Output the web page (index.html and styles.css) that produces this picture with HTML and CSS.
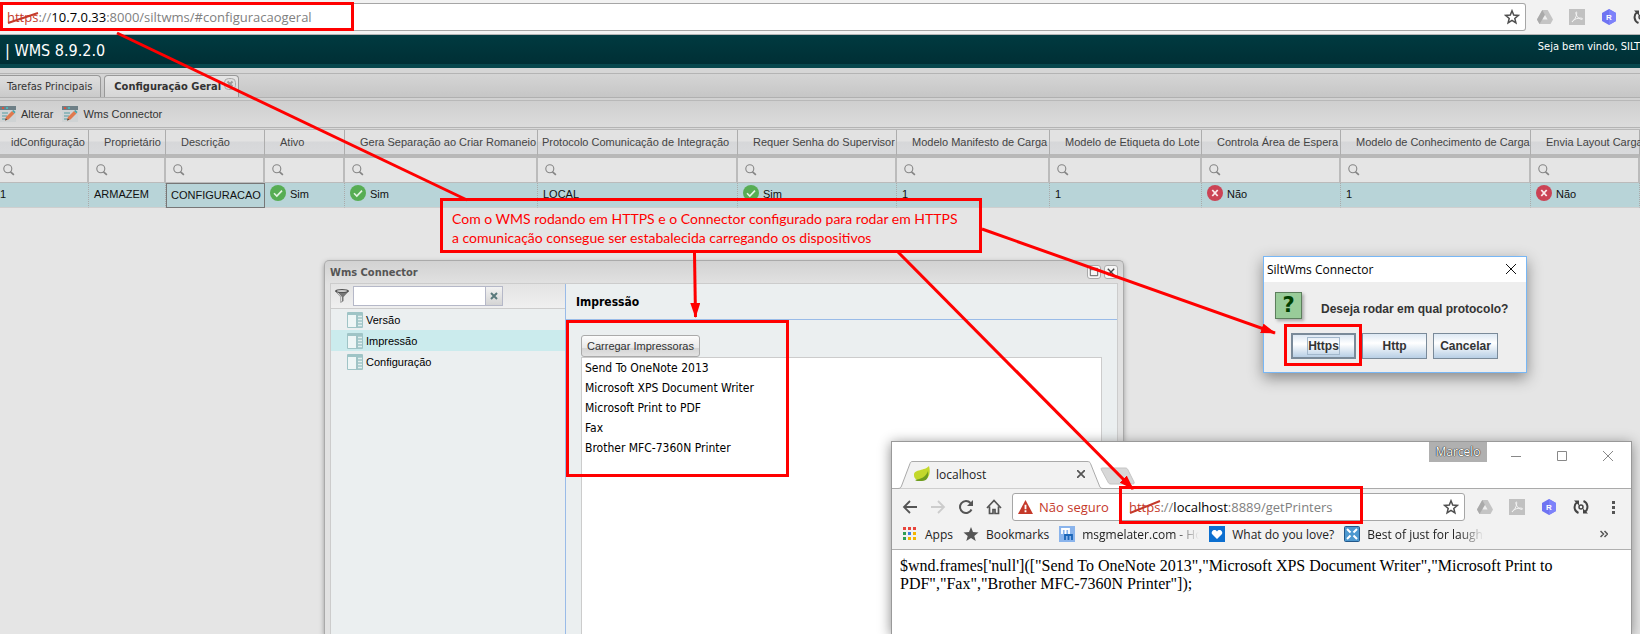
FILE: index.html
```
<!DOCTYPE html>
<html lang="pt-BR">
  <head>
    <meta charset="UTF-8">
    <meta name="viewport" content="width=device-width, initial-scale=1.0">
    <title>WMS 8.9.2.0</title>
    <link rel="stylesheet" href="styles.css">
  </head>
  <body>
    <!--shared icons-->
    <svg class="defs" aria-hidden="true">
      <symbol id="star" viewBox="0 0 16 16"><path d="M8 1.8l1.7 4.3 4.6.3-3.5 3 1.1 4.5L8 11.4l-3.9 2.5 1.1-4.5-3.5-3 4.6-.3z" fill="none" stroke="#4f4f4f" stroke-width="1.5"/></symbol>
      <symbol id="drive" viewBox="0 0 16 16"><path d="M5.300 1h5.400L16 10.500 13.500 15h-11L0 10.500z" fill="#c4c4c4"/><path d="M5.300 1L0 10.500 2.500 15 8 6z" fill="#aaa"/><path d="M8 6l2.600 4.500H5.400z" fill="#eee"/></symbol>
      <symbol id="pdf" viewBox="0 0 16 16"><path d="M0 0h16v16H0z" fill="#c1c1c1"/><path d="M3 13c2-1 5-6 4.700-9.500C7.500 2 6.400 3 7 5c.8 3 3.500 5.500 6 5.300 1.500-.3 0-1.600-3-1.200C7 9.500 3.500 11 3 13z" fill="none" stroke="#f4f4f4"/></symbol>
      <symbol id="hexa" viewBox="0 0 16 16"><path d="M8 0l7 4v8l-7 4-7-4V4z" fill="#6f74f2"/><path d="M8 0l7 4v8l-7 4z" fill="#7d82fa"/><text x="8" y="11" text-anchor="middle" class="hexa-letter">R</text></symbol>
      <symbol id="sync" viewBox="0 0 16 16"><path d="M5.500 14A6.300 6.300 0 0 1 4 3.200M10.500 2A6.300 6.300 0 0 1 12 12.800" fill="none" stroke="#444" stroke-width="2"/><path d="M1 1.500h5v5zM15 14.500h-5v-5z" fill="#444"/><circle cx="8" cy="8" r="2" fill="none" stroke="#444" stroke-width="1.500"/></symbol>
      <symbol id="edit" viewBox="0 0 16 16"><path d="M0 0h16v4H0z" fill="#6e7f86"/><path d="M2 1h2v2H2z" fill="#d8533e"/><path d="M6 1h2v2H6z" fill="#4bb3b8"/><path d="M0 4h16v12H0z" fill="#cfd3d4"/><path d="M2 7h6M2 10h5M2 13h3" stroke="#7fb0b3" stroke-width="1.500"/><path d="M5 14.500l1-3.500 6-6 2.500 2.500-6 6z" fill="#e07a4e"/><path d="M12 5l1.500-1 2 2-1 1.500z" fill="#45a3aa"/><path d="M5 14.500l.7-2.300 1.600 1.600z" fill="#444"/></symbol>
      <symbol id="lens" viewBox="0 0 12 12"><circle cx="4.800" cy="4.800" r="4" fill="none" stroke="#858585" stroke-width="1.100"/><path d="M7.500 7.800l3.400 3" stroke="#858585" stroke-width="1.700"/></symbol>
      <symbol id="yes" viewBox="0 0 16 16"><circle cx="8" cy="8" r="8" fill="#57ad54"/><path d="M4 8.300l2.800 2.800L12 5.600" fill="none" stroke="#e4f3e4" stroke-width="1.600"/></symbol>
      <symbol id="no" viewBox="0 0 16 16"><circle cx="8" cy="8" r="8" fill="#cb4355"/><path d="M5.300 5l5.400 6M10.700 5l-5.400 6" stroke="#fbe9ec" stroke-width="1.800"/></symbol>
      <symbol id="form" viewBox="0 0 16 16"><path d="M1 0h14a1 1 0 0 1 1 1v14a1 1 0 0 1-1 1H1a1 1 0 0 1-1-1V1a1 1 0 0 1 1-1z" fill="#9fc4c6"/><path d="M1 3h8v12H1z" fill="#eef6f6"/><path d="M11 4.500h4M11 7.500h4M11 10.500h4M11 13.500h4" stroke="#e1efef" stroke-width="1.500"/></symbol>
    </svg>

    <div class="desktop">
      <div class="topbar">
        <div class="address" role="textbox" aria-label="Endereço"><span class="scheme">https</span><span>://</span><b>10.7.0.33</b><span>:8000/siltwms/#configuracaogeral</span><svg class="icon push"><use href="#star"/></svg></div>
        <div class="extensions">
          <svg class="icon"><use href="#drive"/></svg>
          <svg class="icon"><use href="#pdf"/></svg>
          <svg class="icon"><use href="#hexa"/></svg>
          <svg class="icon"><use href="#sync"/></svg>
        </div>
      </div>

      <div class="header">
        <h1>| WMS 8.9.2.0</h1>
        <span class="welcome">Seja bem vindo, SILT</span>
      </div>

      <div class="tabs">
        <button class="tab">Tarefas Principais</button>
        <button class="tab active">Configuração Geral<svg class="tab-close" viewBox="0 0 12 12"><rect x=".5" y=".5" width="11" height="11" rx="4" fill="#ddd" stroke="#aaa"/><path d="M3.500 3.500l5 5M8.500 3.500l-5 5" stroke="#999" stroke-width="2"/></svg></button>
      </div>

      <div class="toolbar">
        <button><svg class="icon"><use href="#edit"/></svg>Alterar</button>
        <button><svg class="icon"><use href="#edit"/></svg>Wms Connector</button>
      </div>

      <table class="grid">
        <colgroup>
          <col class="c1"><col class="c2"><col class="c3"><col class="c4"><col class="c5"><col class="c6">
          <col class="c7"><col class="c8"><col class="c9"><col class="c10"><col class="c11"><col>
        </colgroup>
        <thead>
          <tr>
            <th class="tight">idConfiguração</th>
            <th>Proprietário</th>
            <th>Descrição</th>
            <th>Ativo</th>
            <th>Gera Separação ao Criar Romaneio</th>
            <th class="flush">Protocolo Comunicação de Integração</th>
            <th>Requer Senha do Supervisor</th>
            <th>Modelo Manifesto de Carga</th>
            <th>Modelo de Etiqueta do Lote</th>
            <th>Controla Área de Espera</th>
            <th>Modelo de Conhecimento de Carga</th>
            <th>Envia Layout Carga</th>
          </tr>
          <tr class="filters">
            <td class="first"><label><svg><use href="#lens"/></svg><input aria-label="idConfiguração"></label></td>
            <td><label><svg><use href="#lens"/></svg><input aria-label="Proprietário"></label></td>
            <td><label><svg><use href="#lens"/></svg><input aria-label="Descrição"></label></td>
            <td><label><svg><use href="#lens"/></svg><input aria-label="Ativo"></label></td>
            <td><label><svg><use href="#lens"/></svg><input aria-label="Gera Separação"></label></td>
            <td><label><svg><use href="#lens"/></svg><input aria-label="Protocolo"></label></td>
            <td><label><svg><use href="#lens"/></svg><input aria-label="Requer Senha"></label></td>
            <td><label><svg><use href="#lens"/></svg><input aria-label="Modelo Manifesto"></label></td>
            <td><label><svg><use href="#lens"/></svg><input aria-label="Modelo de Etiqueta"></label></td>
            <td><label><svg><use href="#lens"/></svg><input aria-label="Controla Área"></label></td>
            <td><label><svg><use href="#lens"/></svg><input aria-label="Modelo de Conhecimento"></label></td>
            <td><label><svg><use href="#lens"/></svg><input aria-label="Envia Layout"></label></td>
          </tr>
        </thead>
        <tbody>
          <tr>
            <td class="first">1</td>
            <td>ARMAZEM</td>
            <td class="selected">CONFIGURACAO</td>
            <td><span class="flag"><svg class="icon"><use href="#yes"/></svg>Sim</span></td>
            <td><span class="flag"><svg class="icon"><use href="#yes"/></svg>Sim</span></td>
            <td>LOCAL</td>
            <td><span class="flag"><svg class="icon"><use href="#yes"/></svg>Sim</span></td>
            <td>1</td>
            <td>1</td>
            <td><span class="flag"><svg class="icon"><use href="#no"/></svg>Não</span></td>
            <td>1</td>
            <td><span class="flag"><svg class="icon"><use href="#no"/></svg>Não</span></td>
          </tr>
        </tbody>
      </table>

      <!--Wms Connector window-->
      <div class="connector">
        <div class="connector-title">
          <h2>Wms Connector</h2>
          <button class="tool" aria-label="Maximizar"><svg viewBox="0 0 13 13"><path d="M2.500 2.500h8v8h-8zM2 4h9" fill="none" stroke="#555"/></svg></button>
          <button class="tool" aria-label="Fechar"><svg viewBox="0 0 13 13"><path d="M3 3l7 7M10 3l-7 7" stroke="#444" stroke-width="1.500"/></svg></button>
        </div>
        <div class="connector-body">
          <div class="tree">
            <div class="tree-filter">
              <svg class="funnel" viewBox="0 0 14 14"><path d="M0 2l5.500 6v6l3-2V8L14 2z" fill="#777"/><path d="M2 3l4.500 5v4.500" fill="none" stroke="#ddd"/><ellipse cx="7" cy="2" rx="7" ry="2" fill="#555"/><ellipse cx="7" cy="2" rx="5" ry="1" fill="#ccc"/></svg>
              <input aria-label="Filtro">
              <button aria-label="Limpar"><svg viewBox="0 0 8 8"><path d="M1 1l6 6M7 1L1 7" stroke="#5a7a7c" stroke-width="2"/></svg></button>
            </div>
            <ul>
              <li><a href="#versao"><svg class="icon"><use href="#form"/></svg>Versão</a></li>
              <li class="current"><a href="#impressao"><svg class="icon"><use href="#form"/></svg>Impressão</a></li>
              <li><a href="#configuracao"><svg class="icon"><use href="#form"/></svg>Configuração</a></li>
            </ul>
          </div>
          <div class="detail">
            <h3>Impressão</h3>
            <div class="detail-body">
              <button class="load">Carregar Impressoras</button>
              <ul class="printers">
                <li>Send To OneNote 2013</li>
                <li>Microsoft XPS Document Writer</li>
                <li>Microsoft Print to PDF</li>
                <li>Fax</li>
                <li>Brother MFC-7360N Printer</li>
              </ul>
            </div>
          </div>
        </div>
      </div>

      <!--protocol dialog-->
      <div class="dialog" role="dialog" aria-label="SiltWms Connector">
        <div class="dialog-title">
          <span>SiltWms Connector</span>
          <button aria-label="Fechar"><svg viewBox="0 0 10 10"><path d="M0 0l10 10M10 0L0 10" stroke="#111"/></svg></button>
        </div>
        <div class="question">
          <span class="question-mark">?</span>
          <p>Deseja rodar em qual protocolo?</p>
        </div>
        <div class="choices">
          <button class="default"><span>Https</span></button>
          <button>Http</button>
          <button>Cancelar</button>
        </div>
      </div>

      <!--browser window with the printers response-->
      <div class="browser">
        <div class="strip">
          <svg class="tab-shape" viewBox="0 0 246 28"><path d="M0 27.500h3c2 0 3-1 3.500-2.500l8.500-22.500C15.500 1 16 .5 18 .5h174c2 0 3 .5 3.500 2l9 22.500c.5 1.500 1.500 2.500 3.500 2.500z" fill="#f2f2f2"/><path d="M0 27.500h3c2 0 3-1 3.500-2.500l8.500-22.500C15.500 1 16 .5 18 .5h174c2 0 3 .5 3.500 2l9 22.500c.5 1.500 1.500 2.500 3.500 2.500h38" fill="none" stroke="#aaa"/><path d="M207 7h23c1.500 0 2.500.5 3 2l6 12c.5 1.500 0 2-1.500 2H216c-1.500 0-2.500-.5-3-2l-6.500-12c-.5-1.500-.5-2 .5-2z" fill="#d8d8d8" stroke="#c4c4c4"/></svg>
          <div class="tab-label">
            <svg class="icon" viewBox="0 0 16 16"><path d="M15 0c2 7 0 14-7 14-5 1-8-1-8-5C0 3 11 5 15 0z" fill="#c3d82c"/><path d="M1 14c6-1 11-3 13-9 1 6-1 10-6 10-3 0-5 .5-7-1z" fill="#6f9d1e"/></svg>
            <span>localhost</span>
            <svg class="small" viewBox="0 0 8 8"><path d="M0 0l8 8M8 0L0 8" stroke="#555" stroke-width="1.700"/></svg>
          </div>
          <span class="profile">Marcelo</span>
          <div class="controls">
            <svg viewBox="0 0 10 10"><path d="M0 5.500h10" stroke="#888"/></svg>
            <svg viewBox="0 0 10 10"><path d="M.5.5h9v9h-9z" fill="none" stroke="#888"/></svg>
            <svg viewBox="0 0 10 10"><path d="M0 0l10 10M10 0L0 10" stroke="#888"/></svg>
          </div>
        </div>
        <div class="nav">
          <svg class="icon" viewBox="0 0 16 16"><path d="M15 8H2M8 2L2 8l6 6" fill="none" stroke="#555" stroke-width="1.800"/></svg>
          <svg class="icon" viewBox="0 0 16 16"><path d="M1 8h13M8 2l6 6-6 6" fill="none" stroke="#ccc" stroke-width="1.800"/></svg>
          <svg class="icon" viewBox="0 0 16 16"><path d="M13.500 10.500A6 6 0 1 1 12.500 4" fill="none" stroke="#555" stroke-width="2"/><path d="M15 1v6H9z" fill="#555"/></svg>
          <svg class="icon" viewBox="0 0 16 16"><path d="M1 9l7-7.500L15 9M3.500 7.500v7h3.500v-4h2v4h3.500v-7" fill="none" stroke="#555" stroke-width="1.700"/></svg>
          <div class="address small-address" role="textbox" aria-label="Endereço localhost">
            <svg class="warn" viewBox="0 0 14 13"><path d="M7 0l7 13H0z" fill="#c5392a"/><path d="M7 4.500v4M7 9.500v2" stroke="#fff" stroke-width="1.700"/></svg>
            <span class="insecure">Não seguro</span><span class="scheme">https</span><span>://</span><b>localhost</b><span>:8889/getPrinters</span><svg class="icon push"><use href="#star"/></svg>
          </div>
          <div class="extensions">
            <svg class="icon"><use href="#drive"/></svg>
            <svg class="icon"><use href="#pdf"/></svg>
            <svg class="icon"><use href="#hexa"/></svg>
            <svg class="icon"><use href="#sync"/></svg>
            <svg class="icon" viewBox="0 0 16 16"><path d="M7 2h3v3H7zM7 7h3v3H7zM7 12h3v3H7z" fill="#555"/></svg>
          </div>
        </div>
        <div class="bookmarks">
          <a href="#apps"><svg class="icon" viewBox="0 0 16 16"><path d="M1 1h3v3H1zM6 1h3v3H6zM11 1h3v3h-3z" fill="#e8453c"/><path d="M1 6h3v3H1zM1 11h3v3H1z" fill="#2f9e55"/><path d="M6 6h3v3H6z" fill="#3f7de0"/><path d="M11 6h3v3h-3zM6 11h3v3H6zM11 11h3v3h-3z" fill="#f4b400"/></svg>Apps</a>
          <a href="#bookmarks"><svg class="icon" viewBox="0 0 16 16"><path d="M8 1l2 5 5.500.4-4.200 3.500 1.400 5.100L8 12l-4.700 3 1.400-5.100L.5 6.400 6 6z" fill="#555"/></svg>Bookmarks</a>
          <a href="#msgmelater" class="cut"><svg class="icon" viewBox="0 0 16 16"><path d="M0 0h16v16H0z" fill="#8ab4ec"/><path d="M3 8V3h7v5M6.500 3v5" fill="none" stroke="#fff" stroke-width="1.800"/><path d="M6 14V9h7v5M9.500 9v5" fill="none" stroke="#1c66b8" stroke-width="1.800"/></svg>msgmelater.com - Ho</a>
          <a href="#love"><svg class="icon" viewBox="0 0 16 16"><path d="M0 0h16v16H0z" fill="#0c6fd0"/><path d="M8 13L3 8c-1.500-3 3-6 5-2.500C10 2 14.500 5 13 8z" fill="#fff"/></svg>What do you love?</a>
          <a href="#laughs" class="cut"><svg class="icon" viewBox="0 0 16 16"><rect x=".5" y=".5" width="15" height="15" rx="1" fill="#4d98cf" stroke="#23588a"/><path d="M3 3l3.500 3.500M13 3L9.500 6.500M3 13l3.500-3.500M13 13L9.500 9.500" stroke="#fff" stroke-width="2"/></svg>Best of just for laughs</a>
          <svg class="more" viewBox="0 0 8 8"><path d="M.5 1l3 3-3 3M4.500 1l3 3-3 3" fill="none" stroke="#555" stroke-width="1.500"/></svg>
        </div>
        <div class="response">$wnd.frames['null'](["Send To OneNote 2013","Microsoft XPS Document Writer","Microsoft Print to PDF","Fax","Brother MFC-7360N Printer"]);</div>
      </div>

      <!--red notes over the windows-->
      <svg class="marks" aria-hidden="true">
        <defs><marker id="tip" markerUnits="userSpaceOnUse" markerWidth="16" markerHeight="10" refX="14" refY="5" orient="auto"><path d="M0 0l15 5-15 5z" fill="red"/></marker></defs>
        <path d="M1.500 3.500h351v26h-351zM567.500 321.500h220v154h-220zM1285.500 325.500h75v39h-75zM1120.500 487.500h241v35h-241z"/>
        <path d="M117 33l350 167"/>
        <path d="M694.500 253l1 64" marker-end="url(#tip)"/>
        <path d="M898 252l235 237" marker-end="url(#tip)"/>
        <path d="M982 229l293 104" marker-end="url(#tip)"/>
        <path class="strike" d="M8 23l30-10M1130 513l30-12"/>
      </svg>
      <div class="note">Com o WMS rodando em HTTPS e o Connector configurado para rodar em HTTPS<br>a comunicação consegue ser estabalecida carregando os dispositivos</div>
    </div>
  </body>
</html>
```
FILE: styles.css
```
*{
  box-sizing: border-box;
  margin: 0;
  padding: 0;
}

body{
  font-family: "Liberation Sans", Arial, sans-serif;
  font-size: 11px;
  color: #333;
}

button, input{
  font: inherit;
  color: inherit;
  background: none;
  border: 0;
}

ul{
  list-style: none;
}

a{
  color: inherit;
  text-decoration: none;
}

.defs{
  position: absolute;
  width: 0;
  height: 0;
}

.desktop{
  position: relative;
  height: 100vh;
  min-height: 480px;
  overflow: hidden;
  background-color: #e5e5e5;
}

.icon{
  width: 16px;
  height: 16px;
  flex: none;
}

.hexa-letter{
  font: bold 8px "Liberation Sans", sans-serif;
  fill: #fff;
}

/*browser bar*/
.topbar{
  display: flex;
  align-items: center;
  height: 35px;
  background-color: #f2f2f2;
  border-bottom: 1px solid #b4b4b4;
}

.address{
  display: flex;
  align-items: center;
  flex: 1;
  height: 28px;
  padding: 0 5px 0 7px;
  background-color: #fff;
  border: 1px solid #a6a6a6;
  border-left: 0;
  border-radius: 0 3px 3px 0;
  font: 13px "Open Sans", "Noto Sans", sans-serif;
  color: #808080;
}

.address b{
  font-weight: normal;
  color: #000;
}

.address .scheme, .insecure{
  color: #c5392a;
}

.push{
  margin-left: auto;
}

.extensions{
  display: flex;
  gap: 16px;
  padding-left: 11px;
}

.topbar .extensions{
  width: 114px;
  overflow: hidden;
}

/*application header*/
.header{
  display: flex;
  justify-content: space-between;
  height: 33px;
  padding-left: 5px;
  background: linear-gradient(#003a40, #002f35);
  border-bottom: 4px solid #07474d;
  color: #fff;
  font-family: "DejaVu Sans Condensed", "Noto Sans", sans-serif;
}

.header h1{
  font-size: 16px;
  font-weight: normal;
  line-height: 32px;
}

.welcome{
  line-height: 24px;
  white-space: nowrap;
}

.tabs{
  display: flex;
  align-items: flex-end;
  gap: 3px;
  height: 30px;
  padding-top: 5px;
  background: linear-gradient(#d6d6d6 5px, #b4b4b4 5px, #b4b4b4 6px, #d5d5d5 6px, #c6c6c6);
  border-bottom: 1px solid #b0b0b0;
}

.tab{
  height: 22px;
  padding: 0 8px 0 7px;
  border: 1px solid #999;
  border-left: 0;
  border-bottom: 0;
  border-radius: 0 4px 0 0;
  background: linear-gradient(#dedede, #cacaca);
  font-family: "DejaVu Sans Condensed", "Noto Sans", sans-serif;
}

.tab.active{
  display: flex;
  align-items: center;
  padding-left: 9px;
  padding-right: 2px;
  border-left: 1px solid #999;
  border-radius: 4px 4px 0 0;
  background: linear-gradient(#e6e6e6, #d6d6d6);
  font-weight: bold;
}

.tab-close{
  width: 12px;
  height: 12px;
  margin-left: 3px;
  margin-bottom: 6px;
}

.toolbar{
  display: flex;
  align-items: center;
  gap: 9px;
  height: 32px;
  background: linear-gradient(#d2d2d2 2px, #b8b8b8 2px, #b8b8b8 3px, #cfcfcf 3px, #dcdcdc 29px, #b4b4b4 29px, #b4b4b4 30px, #d8d8d8 30px);
  border-bottom: 1px solid #b8b8b8;
}

.toolbar button{
  display: flex;
  align-items: center;
  gap: 5px;
}

/*configuration grid*/
.grid{
  width: 100%;
  table-layout: fixed;
  border-collapse: separate;
  border-spacing: 0;
  white-space: nowrap;
}

.c1{ width: 89px; }
.c2{ width: 77px; }
.c3{ width: 99px; }
.c4{ width: 80px; }
.c5{ width: 193px; }
.c6{ width: 200px; }
.c7{ width: 159px; }
.c8{ width: 153px; }
.c9{ width: 152px; }
.c10{ width: 139px; }
.c11{ width: 190px; }

.grid th{
  height: 28px;
  padding-left: 15px;
  border-right: 1px solid #adadad;
  border-bottom: 4px solid #b8b8b8;
  background: linear-gradient(#e2e2e2 11px, #d6d7d9 12px, #d9dadc);
  font-weight: normal;
  text-align: left;
  color: #444;
}

.grid .tight{
  padding-left: 11px;
}

.grid .flush{
  padding-left: 4px;
}

.grid td{
  height: 25px;
  padding: 0 0 2px 5px;
  border-right: 1px dotted #aaa;
  border-bottom: 1px solid #cfcfcf;
  background-color: #b8d4d8;
  color: #111;
}

.grid .first{
  padding-left: 0;
}

.grid .selected{
  border: 1px solid #777;
  padding-left: 4px;
}

.grid .filters td{
  padding-left: 7px;
  padding-bottom: 0;
  border-right: 2px solid #bbb;
  border-bottom: 1px solid #bbb;
  background-color: #e5e5e5;
}

.grid .filters .first{
  padding-left: 3px;
}

.filters label{
  display: flex;
  align-items: center;
  gap: 4px;
}

.filters svg{
  width: 12px;
  height: 12px;
  flex: none;
}

.filters input{
  flex: 1;
  min-width: 0;
}

.flag{
  display: flex;
  align-items: center;
  gap: 4px;
}

.flag .icon{
  margin-bottom: 3px;
}

/*Wms Connector window*/
.connector{
  position: absolute;
  left: 324px;
  top: 260px;
  bottom: 0;
  width: 800px;
  display: flex;
  flex-direction: column;
  padding: 0 5px;
  border: 1px solid #aaa;
  border-bottom: 0;
  border-radius: 5px 5px 0 0;
  background: linear-gradient(#d2d2d2, #e2e2e2 24px);
  box-shadow: 0 2px 5px #999;
}

.connector-title{
  display: flex;
  align-items: center;
  gap: 3px;
  height: 22px;
}

.connector-title h2{
  flex: 1;
  font: bold 11px "DejaVu Sans Condensed", "Noto Sans", sans-serif;
  color: #555;
}

.tool{
  width: 14px;
  height: 14px;
  border: 1px solid #aaa;
  border-radius: 3px;
  background-color: #f6f6f6;
}

.tool svg{
  display: block;
}

.connector-body{
  display: flex;
  flex: 1;
  border: 1px solid #ccc;
  border-bottom: 0;
  background-color: #ebeff0;
  color: #000;
}

.tree{
  width: 234px;
}

.tree-filter{
  display: flex;
  align-items: center;
  height: 25px;
  padding-left: 4px;
  border-bottom: 1px solid #ccc;
  background: linear-gradient(#e3e3e3, #efefef);
}

.funnel{
  width: 14px;
  height: 14px;
  margin-right: 4px;
}

.tree-filter input{
  width: 133px;
  height: 20px;
  border: 1px solid #b5b8c8;
  background-color: #fff;
}

.tree-filter button{
  width: 17px;
  height: 20px;
  border: 1px solid #b5b8c8;
  border-left: 0;
  background: linear-gradient(#f2f2f2, #d4d4d4);
}

.tree-filter button svg{
  width: 8px;
}

.tree a{
  display: flex;
  align-items: center;
  gap: 3px;
  height: 21px;
  padding-left: 16px;
}

.tree .current{
  background-color: #cbebed;
}

.detail{
  display: flex;
  flex: 1;
  flex-direction: column;
  border-left: 1px solid #99bbe8;
}

.detail h3{
  height: 36px;
  padding-left: 10px;
  border-bottom: 1px solid #99bbe8;
  font: bold 12px/36px "DejaVu Sans Condensed", "Noto Sans", sans-serif;
}

.detail-body{
  display: flex;
  flex: 1;
  flex-direction: column;
  align-items: flex-start;
  padding: 15px 15px 0;
}

.load{
  height: 22px;
  padding: 0 5px;
  border: 1px solid #aaa;
  border-radius: 3px;
  background: linear-gradient(#fcfcfc, #e8e8e8 12px, #d4d4d4 12px, #e2e2e2);
  color: #333;
}

.printers{
  align-self: stretch;
  flex: 1;
  padding: 0 3px;
  border: 1px solid #ccc;
  border-bottom: 0;
  background-color: #fff;
  font: 12px/20px "DejaVu Sans Condensed", "Noto Sans", sans-serif;
}

/*protocol dialog*/
.dialog{
  position: absolute;
  left: 1263px;
  top: 256px;
  width: 264px;
  height: 117px;
  border: 1px solid #78b7f5;
  background-color: #eee;
  box-shadow: 0 5px 14px #888;
}

.dialog-title{
  display: flex;
  align-items: center;
  justify-content: space-between;
  height: 25px;
  padding: 0 10px 1px 3px;
  background-color: #fff;
  color: #000;
  font: 12px "Open Sans", "Noto Sans", sans-serif;
}

.dialog-title svg{
  display: block;
  width: 10px;
}

.question{
  display: flex;
  align-items: center;
  gap: 19px;
  padding: 10px 11px 0;
}

.question-mark{
  width: 27px;
  height: 27px;
  border: 1px solid #5d7f5d;
  background-color: #99cc99;
  box-shadow: 2px 2px 3px #aaa;
  font: bold 21px/25px "DejaVu Sans", sans-serif;
  text-align: center;
  color: #004000;
}

.question p, .choices{
  font-size: 12px;
  font-weight: bold;
}

.question p{
  padding-top: 6px;
}

.choices{
  display: flex;
  gap: 6px;
  padding: 14px 27px 0;
}

.choices button{
  width: 65px;
  height: 26px;
  border: 1px solid #7a8a99;
  background: linear-gradient(#dde8f3, #fff 9px, #b8cfe5);
}

.choices .default{
  border-width: 2px;
}

.default span{
  padding: 1px 0;
  border: 1px solid #a3b8cc;
}

/*second browser*/
.browser{
  position: absolute;
  left: 891px;
  top: 441px;
  bottom: 0;
  width: 741px;
  border: 1px solid #999;
  border-bottom: 0;
  background-color: #fff;
  box-shadow: 0 2px 12px #888;
  font: 12px "Open Sans", "Noto Sans", sans-serif;
  color: #222;
}

.strip{
  position: relative;
  display: flex;
  height: 47px;
  border-bottom: 1px solid #aaa;
}

.tab-shape{
  position: absolute;
  left: 3px;
  top: 19px;
  width: 246px;
  height: 28px;
}

.tab-label{
  position: relative;
  display: flex;
  align-items: center;
  gap: 6px;
  width: 193px;
  padding: 18px 0 0 22px;
}

.small{
  width: 8px;
  height: 8px;
  margin-left: auto;
}

.profile{
  width: 58px;
  height: 20px;
  margin-left: auto;
  background-color: #b0b0b0;
  text-align: center;
  line-height: 20px;
  color: #fff;
  text-shadow: 0 0 1px #000, 0 0 1px #000;
}

.controls{
  display: flex;
  gap: 36px;
  padding: 9px 18px 0 24px;
}

.controls svg{
  width: 10px;
  height: 10px;
}

.nav{
  display: flex;
  align-items: center;
  gap: 12px;
  height: 32px;
  padding: 4px 10px 0 10px;
  background-color: #f2f2f2;
}

.small-address{
  border-left: 1px solid #a6a6a6;
  border-radius: 3px;
}

.nav .small-address{
  margin-left: -2px;
  padding-left: 5px;
}

.nav .extensions{
  padding-left: 0;
}

.warn{
  width: 15px;
  height: 14px;
  margin-right: 6px;
}

.insecure{
  width: 90px;
}

.bookmarks{
  display: flex;
  align-items: center;
  gap: 10px;
  height: 29px;
  padding: 0 23px 2px 10px;
  background-color: #f2f2f2;
  border-bottom: 1px solid #b0b0b0;
}

.bookmarks a{
  display: flex;
  align-items: center;
  gap: 7px;
  white-space: nowrap;
}

.bookmarks .cut{
  width: 140px;
  overflow: hidden;
  -webkit-mask-image: linear-gradient(90deg, #000 115px, transparent);
  mask-image: linear-gradient(90deg, #000 115px, transparent);
}

.more{
  width: 8px;
  height: 8px;
  margin-left: auto;
}

.response{
  padding: 7px 8px;
  font: 16px/18px "Liberation Serif", "Times New Roman", serif;
  color: #000;
}

/*red notes*/
.marks{
  position: absolute;
  left: 0;
  top: 0;
  width: 100%;
  height: 100%;
  fill: none;
  stroke: #f00;
  stroke-width: 3px;
  pointer-events: none;
}

.marks marker path{
  stroke: none;
}

.marks .strike{
  stroke: #c5392a;
  stroke-width: 2px;
}

.note{
  position: absolute;
  left: 440px;
  top: 198px;
  padding: 8px 9px 3px;
  width: 542px;
  border: 3px solid #f00;
  font: 14px/19px "Lato", "Noto Sans", sans-serif;
  color: #f00;
  white-space: nowrap;
}
```
